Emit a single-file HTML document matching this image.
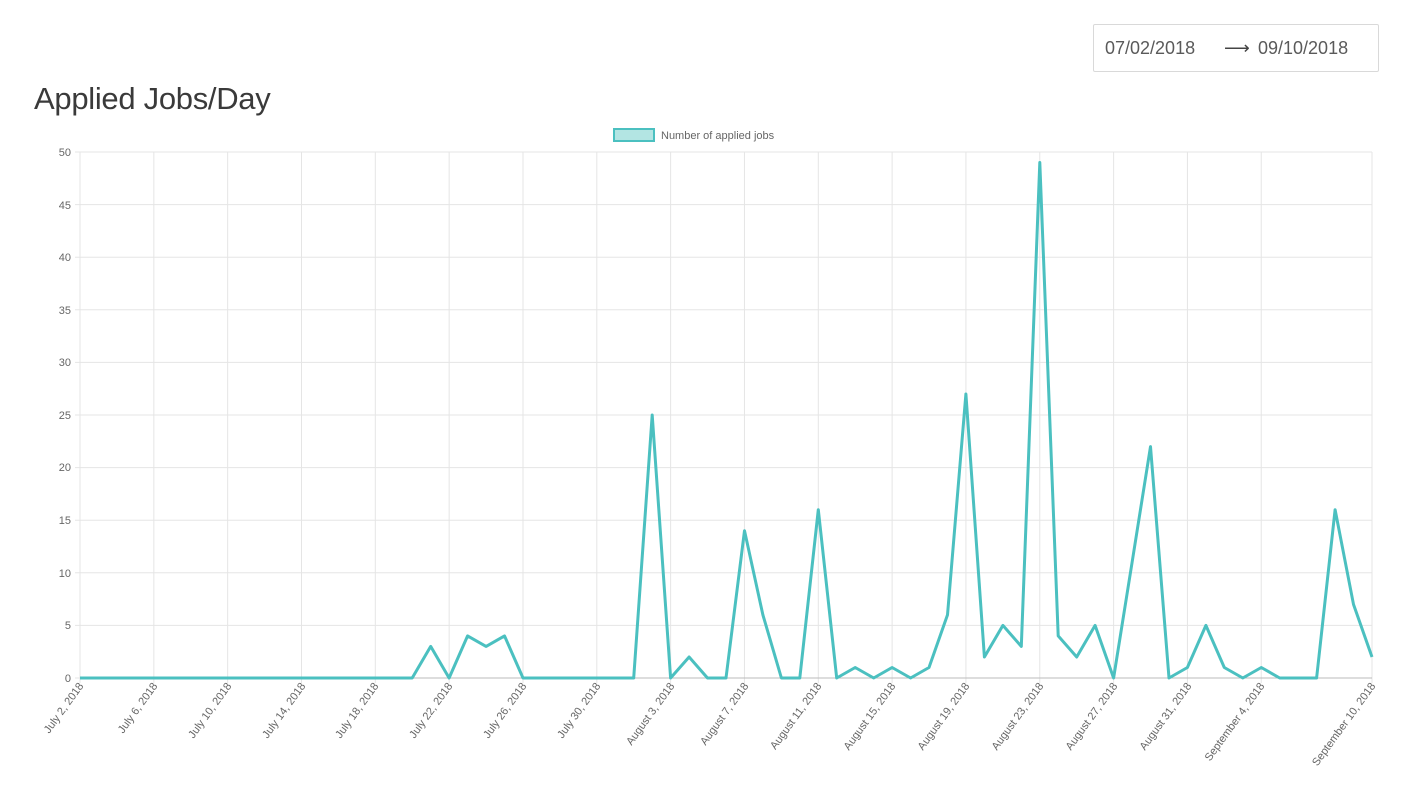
<!DOCTYPE html>
<html><head><meta charset="utf-8"><style>
body{margin:0;background:#fff;width:1418px;height:785px;overflow:hidden;font-family:"Liberation Sans",sans-serif}
.title{position:absolute;left:34px;top:81px;font-size:31px;color:#3a3a3a;font-weight:300;letter-spacing:-0.3px}
.date{position:absolute;left:1093px;top:24px;width:286px;height:48px;border:1px solid #d9d9d9;border-radius:2px;box-sizing:border-box;font-size:18px;color:#5a5a5a}
.date span{position:absolute;top:13px}
svg{position:absolute;left:0;top:0}
</style></head><body>
<div class="title">Applied Jobs/Day</div>
<div class="date"><span style="left:11px">07/02/2018</span><span style="left:130px;color:#444">⟶</span><span style="left:164px">09/10/2018</span></div>
<svg width="1418" height="785" font-family="Liberation Sans, sans-serif" font-size="11" fill="#666">
<rect x="614" y="129" width="40" height="12" fill="#b3e5e3" stroke="#4bc0c0" stroke-width="2"/>
<text x="661" y="139" font-size="11">Number of applied jobs</text>
<g id="grid" stroke="#e5e5e5" stroke-width="1"></g>
<g text-anchor="end">
<text x="71" y="156">50</text><text x="71" y="209">45</text><text x="71" y="261">40</text><text x="71" y="314">35</text><text x="71" y="366">30</text><text x="71" y="419">25</text><text x="71" y="471">20</text><text x="71" y="524">15</text><text x="71" y="577">10</text><text x="71" y="629">5</text><text x="71" y="682">0</text>
</g>
<g text-anchor="end">
<text transform="translate(84,686) rotate(-54)">July 2, 2018</text>
<text transform="translate(158,686) rotate(-54)">July 6, 2018</text>
<text transform="translate(232,686) rotate(-54)">July 10, 2018</text>
<text transform="translate(306,686) rotate(-54)">July 14, 2018</text>
<text transform="translate(379,686) rotate(-54)">July 18, 2018</text>
<text transform="translate(453,686) rotate(-54)">July 22, 2018</text>
<text transform="translate(527,686) rotate(-54)">July 26, 2018</text>
<text transform="translate(601,686) rotate(-54)">July 30, 2018</text>
<text transform="translate(675,686) rotate(-54)">August 3, 2018</text>
<text transform="translate(749,686) rotate(-54)">August 7, 2018</text>
<text transform="translate(822,686) rotate(-54)">August 11, 2018</text>
<text transform="translate(896,686) rotate(-54)">August 15, 2018</text>
<text transform="translate(970,686) rotate(-54)">August 19, 2018</text>
<text transform="translate(1044,686) rotate(-54)">August 23, 2018</text>
<text transform="translate(1118,686) rotate(-54)">August 27, 2018</text>
<text transform="translate(1192,686) rotate(-54)">August 31, 2018</text>
<text transform="translate(1265,686) rotate(-54)">September 4, 2018</text>
<text transform="translate(1376,686) rotate(-54)">September 10, 2018</text>
</g>
<line x1="80" y1="678" x2="1372" y2="678" stroke="#bbb"/>
<polyline id="line" fill="none" stroke="#4bc0c0" stroke-width="3" stroke-linejoin="round"/>
</svg>
<script>
var v=[0,0,0,0,0,0,0,0,0,0,0,0,0,0,0,0,0,0,0,3,0,4,3,4,0,0,0,0,0,0,0,25,0,2,0,0,14,6,0,0,16,0,1,0,1,0,1,6,27,2,5,3,49,4,2,5,0,11,22,0,1,5,1,0,1,0,0,0,16,7,2];
var d=1292/70,p=[];
for(var i=0;i<v.length;i++)p.push((80+d*i).toFixed(1)+","+(678-v[i]*10.52).toFixed(1));
document.getElementById('line').setAttribute('points',p.join(' '));
var g=document.getElementById('grid'),h='';
for(var k=0;k<=10;k++){var y=152+k*52.6;h+='<line x1="75" x2="1372" y1="'+y+'" y2="'+y+'"/>';}
var xs=[0,4,8,12,16,20,24,28,32,36,40,44,48,52,56,60,64,70];
xs.forEach(function(i){var x=80+d*i;h+='<line x1="'+x+'" x2="'+x+'" y1="152" y2="683"/>';});
g.innerHTML=h;
</script>
</body></html>
